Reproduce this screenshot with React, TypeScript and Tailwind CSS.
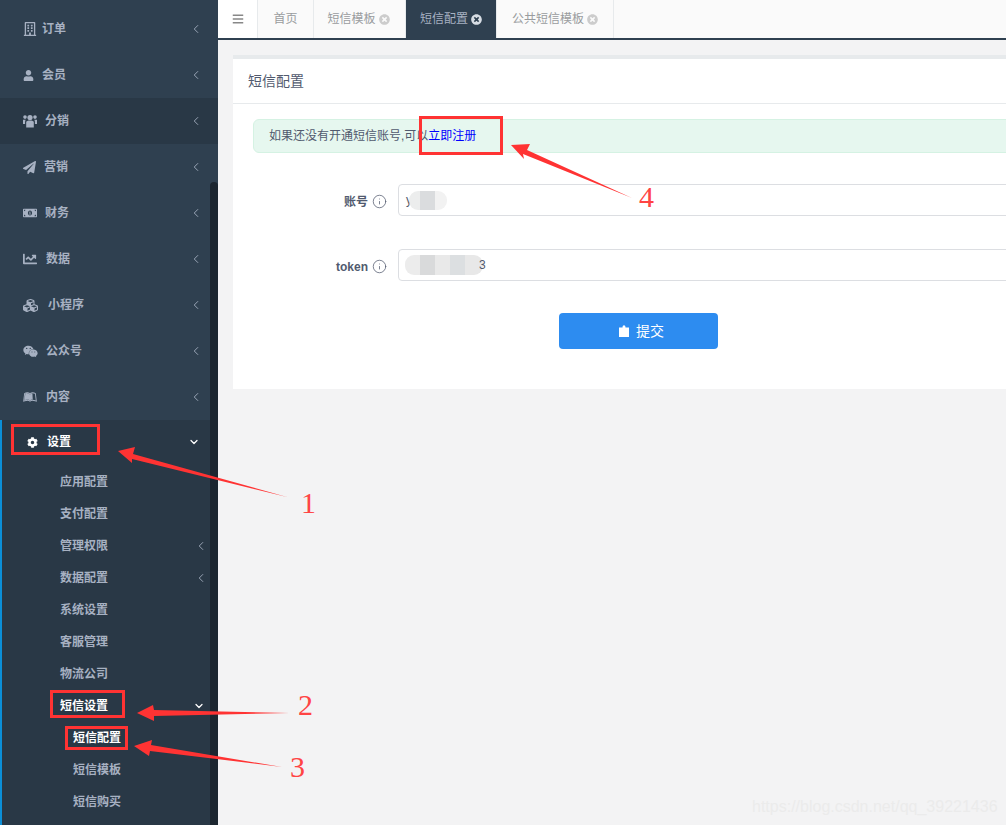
import { ChevronDown, ChevronLeft, Info } from 'lucide-react';
import {
  FaBars,
  FaChartLine,
  FaCog,
  FaCubes,
  FaLeanpub,
  FaMoneyBillAlt,
  FaPaperPlane,
  FaRegBuilding,
  FaTimesCircle,
  FaUser,
  FaWeixin,
} from 'react-icons/fa';

function GroupIcon({ size }: { size: number }) {
  return (
    <svg width={size} height={size} viewBox="0 0 14 13" fill="currentColor">
      <circle cx="7" cy="3" r="2.6" />
      <circle cx="2" cy="2.6" r="1.8" />
      <circle cx="12" cy="2.6" r="1.8" />
      <path d="M3.2 7.2c.8-.9 2-1.2 3.8-1.2s3 .3 3.8 1.2V13H3.200z" />
      <path d="M0 5.200h2.700c-.4.6-.6 1.200-.6 2V9.500H0zM14 5.200h-2.700c.4.6.6 1.200.6 2V9.500H14z" />
    </svg>
  );
}

const menu = [
  { label: '订单', icon: FaRegBuilding, size: 14, box: 'w-[19px]' },
  { label: '会员', icon: FaUser, size: 11, box: 'w-[19px]' },
  { label: '分销', icon: GroupIcon, size: 14, box: 'w-[22px]', hover: true },
  { label: '营销', icon: FaPaperPlane, size: 13, box: 'w-[21px]' },
  { label: '财务', icon: FaMoneyBillAlt, size: 14, box: 'w-[22px]' },
  { label: '数据', icon: FaChartLine, size: 14, box: 'w-[23px]' },
  { label: '小程序', icon: FaCubes, size: 15, box: 'w-[25px]' },
  { label: '公众号', icon: FaWeixin, size: 15, box: 'w-[23px]' },
  { label: '内容', icon: FaLeanpub, size: 14, box: 'w-[23px]' },
];

const subMenu = [
  { label: '应用配置' },
  { label: '支付配置' },
  { label: '管理权限', more: true },
  { label: '数据配置', more: true },
  { label: '系统设置' },
  { label: '客服管理' },
  { label: '物流公司' },
];

const tabs = [
  { label: '首页', box: 'w-[56px]' },
  { label: '短信模板', close: true, box: 'w-[92px] pr-[2px]' },
  { label: '短信配置', close: true, active: true, box: 'w-[91px]' },
  { label: '公共短信模板', close: true, box: 'w-[117px]' },
];

function Sidebar() {
  return (
    <aside className="relative h-[825px] w-[218px] shrink-0 overflow-hidden bg-[#2f4050] pt-[6px] text-xs font-bold text-[#a7b1c2]">
      {menu.map((item) => {
        const Icon = item.icon;
        return (
          <div
            key={item.label}
            className={`flex h-[46px] items-center pl-[23px] pr-[15px] ${item.hover ? 'bg-[#293846]' : ''}`}
          >
            <span className={`${item.box} flex shrink-0 items-center`}>
              <Icon size={item.size} />
            </span>
            <span className="flex-1">{item.label}</span>
            <ChevronLeft size={14} strokeWidth={1.5} />
          </div>
        );
      })}
      <div className="h-[410px] border-l-2 border-[#0b8fd8] bg-[#293846]">
        <div className="flex h-[46px] items-center pb-[2px] pl-[25px] pr-[18px] text-white">
          <span className="flex w-5 shrink-0 items-center">
            <FaCog size={11} />
          </span>
          <span className="flex-1">设置</span>
          <ChevronDown size={12} strokeWidth={2.5} />
        </div>
        {subMenu.map((item) => (
          <div key={item.label} className="flex h-8 items-center pl-[58px] pr-[10px]">
            <span className="flex-1">{item.label}</span>
            {item.more && <ChevronLeft size={14} strokeWidth={1.5} />}
          </div>
        ))}
        <div className="flex h-8 items-center pl-[58px] pr-[13px] text-white">
          <span className="flex-1">短信设置</span>
          <ChevronDown size={12} strokeWidth={2.5} />
        </div>
        <div className="flex h-8 items-center pl-[71px] text-white">短信配置</div>
        <div className="flex h-8 items-center pl-[71px]">短信模板</div>
        <div className="flex h-8 items-center pl-[71px]">短信购买</div>
      </div>
      <div className="absolute bottom-0 right-0 top-[182px] w-2 rounded-t-md bg-[#1c2630]" />
    </aside>
  );
}

function TopTabs() {
  return (
    <div className="flex h-10 border-b-2 border-[#2f4050] bg-white text-xs text-[#999c9e]">
      <div className="flex w-[40px] items-center justify-center border-r border-[#e7eaec] text-[#888]">
        <FaBars size={12} />
      </div>
      <div className="flex flex-1 bg-[#fafafa]">
        {tabs.map((tab) => (
          <div
            key={tab.label}
            className={`flex ${tab.box} items-center justify-center gap-[3px] border-r border-[#e7eaec] ${tab.active ? 'bg-[#2f4050] text-[#a7b1c2]' : ''}`}
          >
            {tab.label}
            {tab.close && (
              <FaTimesCircle size={11} className={tab.active ? 'text-[#d7dde4]' : 'text-[#ccc]'} />
            )}
          </div>
        ))}
      </div>
    </div>
  );
}

function Mosaic({ cells, className }: { cells: [string, number][]; className: string }) {
  return (
    <div className={`absolute flex overflow-hidden rounded-[9px] ${className}`}>
      {cells.map(([color, width], i) => (
        <span key={i} className="h-full" style={{ backgroundColor: color, width }} />
      ))}
    </div>
  );
}

function Field({ label, value, children }: { label: string; value: string; children: React.ReactNode }) {
  return (
    <div className="flex h-8 items-center">
      <label className="flex w-[134px] items-center justify-end gap-1 pt-[3px] text-xs font-bold text-[#515a6e]">
        {label}
        <Info size={15} strokeWidth={1.2} />
      </label>
      <div className="relative ml-[11px] flex h-8 flex-1 items-center rounded border border-[#dcdee2] bg-white px-[7px] text-xs text-[#515a6e]">
        {value}
        {children}
      </div>
    </div>
  );
}

function Annotations() {
  const digit = "absolute font-['Liberation_Serif',serif] text-[30px] leading-none text-[#f44]";
  return (
    <>
      <div className="absolute left-[11px] top-[424px] h-[31px] w-[89px] border-[3px] border-[#ff3333]" />
      <div className="absolute left-[50px] top-[690px] h-[28px] w-[75px] border-[3px] border-[#ff3333]" />
      <div className="absolute left-[65px] top-[726px] h-[24px] w-[63px] border-[3px] border-[#ff3333]" />
      <div className="absolute left-[419px] top-[116px] h-[39px] w-[84px] border-[3px] border-[#ff3333]" />
      <svg className="pointer-events-none absolute left-0 top-0" width="1006" height="825" viewBox="0 0 1006 825">
        <g fill="#ff3333">
          <polygon points="118,451 135,447 133,454 287,497 132,459 132,463" />
          <polygon points="137,713 153,705 154,710 289,713 154,716 154,721" />
          <polygon points="134,746 152,740 151,745 282,767 150,751 149,756" />
          <polygon points="511,145 530,144 527,150 632,198 523,154 524,159" />
        </g>
      </svg>
      <span className={`${digit} left-[301px] top-[488px]`}>1</span>
      <span className={`${digit} left-[298px] top-[690px]`}>2</span>
      <span className={`${digit} left-[290px] top-[752px]`}>3</span>
      <span className={`${digit} left-[639px] top-[182px]`}>4</span>
      <span className="absolute left-[752px] top-[797px] text-base leading-5 text-[#ebebeb]">https://blog.csdn.net/qq_39221436</span>
    </>
  );
}

export default function App() {
  return (
    <div className="relative flex h-[825px] w-[1006px] overflow-hidden bg-[#f3f3f4] font-['Liberation_Sans','Noto_Sans_CJK_SC',sans-serif]">
      <Sidebar />
      <main className="min-w-0 flex-1">
        <TopTabs />
        <section className="ml-[15px] mt-[15px] w-[1100px] border-t-4 border-[#e7eaec] bg-white">
          <h2 className="flex h-[45px] items-center border-b border-[#e7eaec] pl-[15px] text-sm font-normal text-[#515a6e]">短信配置</h2>
          <div className="px-5 pb-10 pt-[15px]">
            <div className="flex h-[34px] items-center rounded-md border border-[#d5f2e3] bg-[#e6f7ef] pl-[15px] text-xs text-[#515a6e]">
              如果还没有开通短信账号,可以<a className="text-[#0000ff]">立即注册</a>
            </div>
            <div className="mt-[31px] flex flex-col gap-[33px]">
              <Field label="账号" value="y">
                <Mosaic
                  className="left-[10px] top-[6px] h-[19px]"
                  cells={[['#eceded', 11], ['#dadcde', 15], ['#f2f2f2', 12]]}
                />
              </Field>
              <Field label="token" value="">
                <Mosaic
                  className="left-[6px] top-[5px] h-5"
                  cells={[['#ececec', 15], ['#d9dadb', 15], ['#e9e9e9', 15], ['#dcdfe1', 15], ['#e8e8e8', 18]]}
                />
                <span className="absolute left-[80px] text-xs">3</span>
              </Field>
            </div>
            <button className="ml-[306px] mt-8 flex h-9 w-[159px] items-center justify-center gap-[7px] rounded bg-[#2d8cf0] pl-1.5 text-sm text-white">
              <svg width="10" height="12" viewBox="0 0 10 12" fill="currentColor">
                <path d="M3.500 2.500 C3.500 1 4.200 .3 5 .3 S6.500 1 6.500 2.500 H10 V12 H0 V2.500 Z" />
              </svg>
              提交
            </button>
          </div>
        </section>
      </main>
      <Annotations />
    </div>
  );
}
